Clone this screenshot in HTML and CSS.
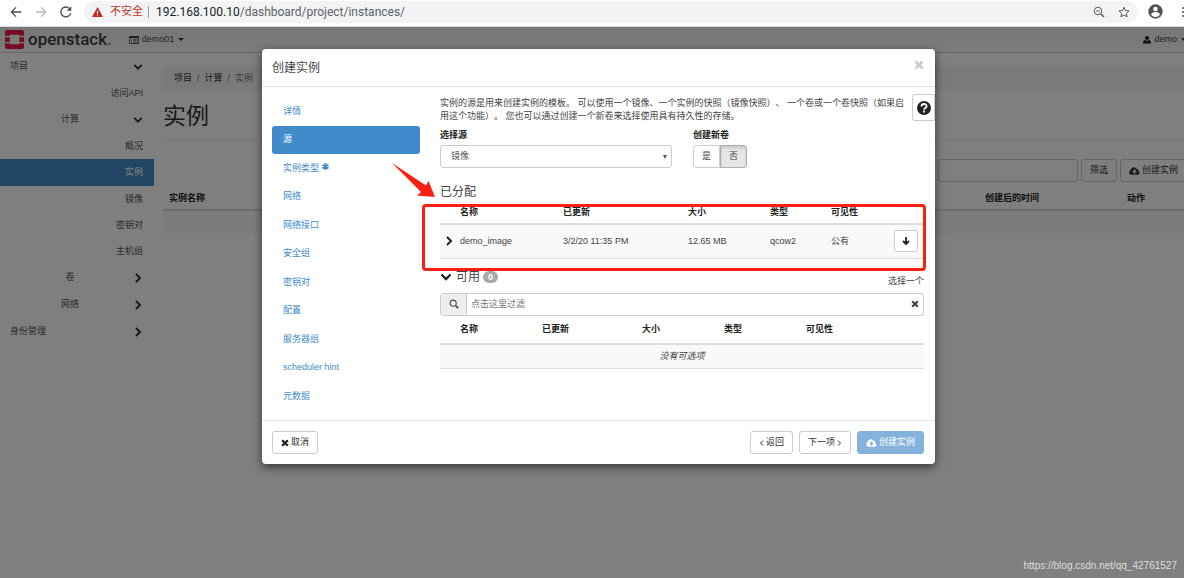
FILE: index.html
```html
<!DOCTYPE html>
<html lang="zh-CN">
<head>
<meta charset="utf-8">
<title>实例 - OpenStack Dashboard</title>
<link rel="stylesheet" href="styles.css">
</head>
<body>
<svg class="sprite" aria-hidden="true">
  <symbol id="chev-right" viewBox="0 0 10 10"><path d="M3 1l4 4-4 4" fill="none" stroke="currentColor" stroke-width="2"/></symbol>
  <symbol id="chev-down" viewBox="0 0 12 12"><path d="M1.500 3.500L6 8l4.500-4.500" fill="none" stroke="currentColor" stroke-width="2.300"/></symbol>
  <symbol id="cloud" viewBox="0 0 20 14"><path fill-rule="evenodd" d="M4.500 14A4.500 4.500 0 0 1 2.700 5.600 5.600 5.600 0 0 1 13 3a3.500 3.500 0 0 1 4 3.800A3.800 3.800 0 0 1 16 14zM10 4L5.500 8.500h3V12h3V8.500h3z" fill="currentColor"/></symbol>
  <symbol id="cross" viewBox="0 0 10 10"><path d="M1.500 1.500l7 7m0-7l-7 7" fill="none" stroke="currentColor" stroke-width="2.800"/></symbol>
</svg>
<div class="app">
  <header class="browser">
    <button class="tool" aria-label="后退"><svg viewBox="0 0 24 24"><path d="M21 12H4m8-8l-8 8 8 8" fill="none" stroke="#4a4d51" stroke-width="2.200"/></svg></button>
    <button class="tool" aria-label="前进"><svg viewBox="0 0 24 24"><path d="M3 12h17m-8-8l8 8-8 8" fill="none" stroke="#b5b7ba" stroke-width="2.200"/></svg></button>
    <button class="tool" aria-label="重新加载"><svg viewBox="0 0 24 24"><path d="M20 14a8.500 8.500 0 1 1-2.300-8.200L20 8" fill="none" stroke="#4a4d51" stroke-width="2.300"/><path d="M21 2v8h-8z" fill="#4a4d51"/></svg></button>
    <div class="omnibox">
      <svg class="warn" viewBox="0 0 12 11"><path d="M6 0l6 11H0z" fill="#c5291f"/><path d="M6 4v3.500M6 8.300v1.300" stroke="#fff" stroke-width="1.200"/></svg>
      <span class="insecure">不安全</span>
      <span class="divider"></span>
      <span class="url">192.168.100.10<span class="path">/dashboard/project/instances/</span></span>
      <button class="tool small push" aria-label="缩放"><svg viewBox="0 0 24 24" fill="none" stroke="#55585c" stroke-width="2"><circle cx="10" cy="10" r="7.500"/><path d="M6.500 10h7"/><path d="M15.500 15.500l6.500 6.500" stroke-width="3"/></svg></button>
      <button class="tool small" aria-label="收藏"><svg viewBox="0 0 24 24"><path d="M12 2.500l2.900 6.600 7.100.7-5.300 4.800 1.500 7L12 18l-6.200 3.600 1.500-7L2 9.800l7.100-.7z" fill="none" stroke="#55585c" stroke-width="2"/></svg></button>
    </div>
    <button class="tool avatar" aria-label="用户"><svg viewBox="0 0 24 24"><circle cx="12" cy="12" r="11.500" fill="#505357"/><circle cx="12" cy="8" r="3.600" fill="#fff"/><path d="M5 17c0-3 4.500-4.300 7-4.300s7 1.300 7 4.300a8.500 8.500 0 0 1-14 0z" fill="#fff"/></svg></button>
    <button class="tool menu" aria-label="菜单"><svg viewBox="0 0 4 14" fill="#505357"><circle cx="2" cy="3" r="1"/><circle cx="2" cy="7" r="1"/><circle cx="2" cy="11" r="1"/></svg></button>
  </header>

  <div class="page">
    <nav class="navbar">
      <a class="brand" href="#"><svg viewBox="0 0 20 20"><path d="M2 0h16a2 2 0 0 1 2 2v4h-5V5H5v1H0V2a2 2 0 0 1 2-2zM0 7.500h5v5H0zM15 7.500h5v5h-5zM0 14h5v1h10v-1h5v4a2 2 0 0 1-2 2H2a2 2 0 0 1-2-2z" fill="#ed1944"/></svg><span>openstack</span><span class="dot">.</span></a>
      <a class="project" href="#"><svg viewBox="0 0 20 16"><path d="M1 1h18v14H1z" fill="none" stroke="#333" stroke-width="1.500"/><path d="M1 2.500h18" stroke="#333" stroke-width="3"/><path d="M4 6.500h2m2 0h9M4 9.500h2m2 0h9M4 12.500h2m2 0h9" stroke="#333" stroke-width="1.300"/></svg>demo01<i class="caret"></i></a>
      <a class="user" href="#"><svg viewBox="0 0 16 16"><circle cx="8" cy="4" r="4" fill="#222"/><path d="M0 15c0-5 2-7 4-7 2 2 6 2 8 0 2 0 4 2 4 7z" fill="#222"/></svg>demo<i class="caret"></i></a>
    </nav>
    <div class="columns">
      <aside class="sidebar">
        <a href="#" class="group"><span>项目</span><svg><use href="#chev-down"/></svg></a>
        <a href="#" class="leaf">访问API</a>
        <a href="#" class="group sub"><span>计算</span><svg><use href="#chev-down"/></svg></a>
        <a href="#" class="leaf">概况</a>
        <a href="#" class="leaf current">实例</a>
        <a href="#" class="leaf">镜像</a>
        <a href="#" class="leaf">密钥对</a>
        <a href="#" class="leaf">主机组</a>
        <a href="#" class="group sub"><span>卷</span><svg><use href="#chev-right"/></svg></a>
        <a href="#" class="group sub"><span>网络</span><svg><use href="#chev-right"/></svg></a>
        <a href="#" class="group"><span>身份管理</span><svg><use href="#chev-right"/></svg></a>
      </aside>
      <main class="content">
        <div class="breadcrumb"><a href="#">项目</a><span>/</span><a href="#">计算</a><span>/</span><span class="here">实例</span></div>
        <h1>实例</h1>
        <div class="filters">
          <input type="text" aria-label="筛选条件">
          <button class="btn">筛选</button>
          <button class="btn"><svg class="cloud"><use href="#cloud"/></svg>创建实例</button>
        </div>
        <table class="instances">
          <thead><tr><th>实例名称</th><th class="col-time">创建后的时间</th><th class="col-action">动作</th></tr></thead>
          <tbody><tr><td colspan="3"></td></tr></tbody>
        </table>
      </main>
    </div>

    <div class="backdrop">
      <section class="dialog" role="dialog" aria-labelledby="dlg-title">
        <header class="dialog-head"><h2 id="dlg-title">创建实例</h2><button class="close" aria-label="关闭"><svg><use href="#cross"/></svg></button></header>
        <div class="dialog-body">
          <nav class="steps">
            <a href="#">详情</a>
            <a href="#" class="active">源</a>
            <a href="#">实例类型 <svg viewBox="0 0 10 10"><path d="M5 0v10M.7 2.500l8.600 5M9.300 2.500l-8.600 5" stroke="currentColor" stroke-width="2.500"/></svg></a>
            <a href="#">网络</a>
            <a href="#">网络接口</a>
            <a href="#">安全组</a>
            <a href="#">密钥对</a>
            <a href="#">配置</a>
            <a href="#">服务器组</a>
            <a href="#">scheduler hint</a>
            <a href="#">元数据</a>
          </nav>
          <div class="source">
            <p class="intro">实例的源是用来创建实例的模板。 可以使用一个镜像、一个实例的快照（镜像快照）、 一个卷或一个卷快照（如果启用这个功能）。 您也可以通过创建一个新卷来选择使用具有持久性的存储。</p>
            <div class="fields">
              <div class="field"><label for="boot">选择源</label><div class="select-wrap"><select id="boot"><option>镜像</option></select></div></div>
              <div class="field"><span class="label" id="vol">创建新卷</span><div class="toggle" role="group" aria-labelledby="vol"><button>是</button><button class="on" aria-pressed="true">否</button></div></div>
            </div>
            <h3 class="allocated-title">已分配</h3>
            <table class="grid allocated">
              <colgroup><col class="w20"><col class="w103"><col class="w125"><col class="w82"><col class="w61"><col></colgroup>
              <thead><tr><th></th><th>名称</th><th>已更新</th><th>大小</th><th>类型</th><th colspan="2">可见性</th></tr></thead>
              <tbody><tr><td><svg class="expand"><use href="#chev-right"/></svg></td><td>demo_image</td><td>3/2/20 11:35 PM</td><td>12.65 MB</td><td>qcow2</td><td>公有</td><td class="act"><button class="btn down" aria-label="移除"><svg viewBox="0 0 10 10"><path d="M5 1v7M2 5l3 3 3-3" fill="none" stroke="#222" stroke-width="1.800"/></svg></button></td></tr></tbody>
            </table>
            <div class="available-title"><svg><use href="#chev-down"/></svg><h3>可用</h3><span class="badge">0</span><span class="hint">选择一个</span></div>
            <div class="search"><span class="glass"><svg viewBox="0 0 12 12" fill="none" stroke="#444"><circle cx="5" cy="5" r="3.700" stroke-width="1.300"/><path d="M7.800 7.800L11 11" stroke-width="2"/></svg></span><input type="text" placeholder="点击这里过滤" aria-label="点击这里过滤"><button aria-label="清除"><svg><use href="#cross"/></svg></button></div>
            <table class="grid available">
              <colgroup><col class="w20"><col class="w82"><col class="w100"><col class="w82"><col class="w82"><col></colgroup>
              <thead><tr><th></th><th>名称</th><th>已更新</th><th>大小</th><th>类型</th><th>可见性</th></tr></thead>
              <tbody><tr><td colspan="6" class="none">没有可选项</td></tr></tbody>
            </table>
          </div>
        </div>
        <footer class="dialog-foot">
          <button class="btn"><svg class="x"><use href="#cross"/></svg>取消</button>
          <button class="btn push"><svg class="thin" viewBox="0 0 5 8"><path d="M4 1.500L1.500 4 4 6.500" fill="none" stroke="#333"/></svg>返回</button>
          <button class="btn">下一项<svg class="thin" viewBox="0 0 5 8"><path d="M1 1.500L3.500 4 1 6.500" fill="none" stroke="#333"/></svg></button>
          <button class="btn primary" disabled><svg class="cloud"><use href="#cloud"/></svg>创建实例</button>
        </footer>
        <button class="help" aria-label="帮助"><svg viewBox="0 0 16 16"><circle cx="8" cy="8" r="8" fill="#222"/><path d="M5.200 6.200C5.200 2.500 11 2.700 11 6c0 2-2.900 2-2.900 4" fill="none" stroke="#fff" stroke-width="2.100"/><path d="M7 11h2.200v2.200H7z" fill="#fff"/></svg></button>
        <div class="mark-box"></div>
        <svg class="mark-arrow" viewBox="0 0 43 35"><path d="M0 0L34 22.500l2.500-4.500L43 34l-18-1.500 4-3.500z" fill="#fb2112"/></svg>
      </section>
      <div class="watermark">https://blog.csdn.net/qq_42761527</div>
    </div>
  </div>
</div>
</body>
</html>
```
FILE: styles.css
```css
* { box-sizing: border-box; }
html, body { height: 100%; }
body {
  margin: 0;
  overflow: hidden;
  font: 9px/13px "Liberation Sans", "Noto Sans CJK SC", sans-serif;
  text-spacing-trim: space-all;
  color: #444;
}
button, input, select { font: inherit; color: inherit; }
button { margin: 0; padding: 0; border: 0; background: none; }
a { color: inherit; text-decoration: none; }
h1, h2, h3, p { margin: 0; font-weight: 400; }
table { width: 100%; border-collapse: collapse; }
th, td { padding: 0; text-align: left; }
svg { display: block; flex: none; }
.sprite { position: absolute; width: 0; height: 0; }
.push { margin-left: auto; }

/* The window continues a little past the right edge */
.app { display: flex; flex-direction: column; height: 100%; margin-right: -13px; }

.browser { display: flex; align-items: center; height: 27px; padding: 0 12px 3px 9px; background: #fff; border-bottom: 1px solid #ddd; }
.tool { margin-right: 11px; }
.tool svg { width: 14px; height: 14px; }
.tool.small { margin-right: 13px; }
.tool.small.push { margin-left: auto; }
.tool.small svg { width: 12px; height: 12px; }
.tool.avatar { margin: 0 18px 0 10px; }
.tool.avatar svg { width: 15px; height: 15px; }
.tool.menu { margin: 0; }
.tool.menu svg { width: 4px; height: 14px; }
.omnibox { flex: 1; display: flex; align-items: center; height: 22px; padding-left: 8px; border-radius: 11px; background: #f1f3f4; font: 12px/20px Roboto, "Noto Sans CJK SC", sans-serif; }
.omnibox .small:last-child { margin-right: 8px; }
.warn { width: 11px; height: 10px; margin-right: 7px; }
.insecure { font-size: 11px; color: #c5372c; }
.divider { width: 1px; height: 12px; margin: 0 7px 0 5px; background: #999; }
.url { color: #202124; }
.path { color: #5f6368; }

.page { position: relative; flex: 1; min-height: 0; background: #fff; }
.navbar { display: flex; align-items: center; height: 26px; padding: 0 10px 0 5px; background: linear-gradient(#eee, #f8f8f8); border-bottom: 1px solid #d0d0d0; }
.navbar a { display: flex; align-items: center; }
.brand { padding-bottom: 2px; font: 500 17px/22px Roboto, sans-serif; color: #3e3e42; }
.brand svg { width: 19px; height: 19px; margin: 1px 4px 0 0; }
.brand .dot { color: #888; }
.project { margin-left: 17px; }
.project svg { width: 10px; height: 8px; margin-right: 3px; }
.user { margin-left: auto; }
.user svg { width: 8px; height: 8px; margin-right: 3px; }
.caret { margin-left: 4px; border: 3px solid transparent; border-top-color: #333; border-bottom: 0; }

.columns { display: flex; }
.sidebar { width: 154px; color: #555; }
.sidebar a { display: flex; align-items: center; height: 26px; padding-right: 11px; }
.sidebar .group { height: 27px; padding-left: 10px; justify-content: space-between; }
.sidebar .sub span { width: 120px; text-align: center; }
.sidebar .group svg { width: 10px; height: 10px; color: #333; }
.sidebar .leaf { justify-content: flex-end; }
.sidebar .current { height: 27px; background: #428bca; color: #fff; }
.content { flex: 1; padding: 13px 10px 0 9px; }
.breadcrumb { display: flex; align-items: center; gap: 5px; height: 24px; padding-left: 11px; background: #f5f5f5; border-radius: 3px; color: #777; }
.breadcrumb a { color: #333; }
.content h1 { padding: 8px 0 6px; border-bottom: 1px solid #eee; font-size: 23px; line-height: 36px; color: #333; }
.filters { display: flex; justify-content: flex-end; gap: 3px; padding: 18px 0 6px; }
.filters input { width: 140px; border: 1px solid #ccc; border-radius: 3px; background: transparent; }
.btn { display: flex; align-items: center; justify-content: center; gap: 2px; height: 23px; padding: 0 8px; border: 1px solid #ccc; border-radius: 3px; background: #fff; color: #333; }
.cloud { width: 11px; height: 8px; }
.instances th { height: 22px; padding-left: 6px; border-bottom: 2px solid #ddd; color: #222; }
.instances .col-time { width: 142px; padding: 0; }
.instances .col-action { width: 60px; padding: 0; }
.instances td { height: 24px; background: #f9f9f9; }

.backdrop { position: absolute; inset: 0; padding: 22px 0; background: rgba(0, 0, 0, .5); }
.dialog { position: relative; width: 57%; min-width: 673px; max-width: 673px; margin: 0 auto; border-radius: 4px; background: #fff; box-shadow: 0 3px 10px rgba(0, 0, 0, .6); }
.dialog-head { display: flex; align-items: center; justify-content: space-between; height: 38px; padding: 0 11px 0 10px; border-bottom: 1px solid #e5e5e5; }
.dialog-head h2 { font-size: 12px; line-height: 18px; }
.close { padding-bottom: 6px; color: #ccc; }
.close svg { width: 10px; height: 10px; }
.dialog-body { display: flex; gap: 20px; min-height: 333px; padding: 10px 11px 10px 10px; }
.steps { display: flex; flex-direction: column; justify-content: space-between; width: 148px; color: #428bca; }
.steps a { display: flex; align-items: center; height: 28px; padding-left: 11px; border-radius: 3px; }
.steps .active { background: #428bca; color: #fff; }
.steps svg { width: 7px; height: 7px; margin: 0 0 4px 3px; }
.source { flex: 1; min-width: 0; }
.intro { padding-right: 12px; }
.fields { display: flex; gap: 21px; padding-top: 6px; }
.field:first-child { width: 232px; }
.field label, .label { display: block; font-weight: 700; line-height: 13px; margin-bottom: 3px; color: #222; }
.select-wrap { position: relative; }
.select-wrap::after { content: ""; position: absolute; right: 5px; top: 10px; border: 2px solid transparent; border-top: 4px solid #555; border-bottom: 0; }
select { width: 100%; height: 23px; padding: 0 10px; border: 1px solid #ccc; border-radius: 3px; appearance: none; background: #fff; color: #555; }
.toggle { display: flex; }
.toggle button { width: 27px; height: 23px; border: 1px solid #ccc; border-radius: 3px 0 0 3px; }
.toggle .on { border-color: #adadad; border-radius: 0 3px 3px 0; background: #e6e6e6; box-shadow: inset 0 2px 3px rgba(0, 0, 0, .13); }
h3 { font-size: 12px; line-height: 18px; }
.allocated-title { margin-top: 15px; }
.grid { table-layout: fixed; }
.grid th { color: #222; border-bottom: 2px solid #ddd; }
.grid td { background: #f9f9f9; border-bottom: 1px solid #ddd; }
.allocated th { height: 23px; }
.allocated td { height: 34px; }
.available th { height: 28px; }
.available td { height: 25px; }
.grid .none { text-align: center; font-style: italic; }
.w20 { width: 20px; }
.w61 { width: 61px; }
.w82 { width: 82px; }
.w100 { width: 100px; }
.w103 { width: 103px; }
.w125 { width: 125px; }
.expand { width: 10px; height: 10px; margin-left: 4px; color: #222; }
.down { width: 24px; height: 22px; margin: 0 6px 0 auto; padding: 0; }
.down svg { width: 10px; height: 10px; }
.available-title { display: flex; align-items: center; height: 20px; margin: 8px 0 6px; }
.available-title svg { width: 12px; height: 12px; margin-right: 4px; color: #222; }
.badge { margin-left: 3px; padding: 0 5px; border-radius: 6px; background: #aaa; color: #fff; font-weight: 700; line-height: 12px; }
.hint { margin: 9px 0 0 auto; }
.search { display: flex; height: 23px; border: 1px solid #ccc; border-radius: 3px; }
.glass { display: flex; align-items: center; justify-content: center; width: 26px; background: #eee; border-right: 1px solid #ccc; }
.glass svg { width: 10px; height: 10px; }
.search input { flex: 1; border: 0; padding: 0 4px; outline: 0; background: none; }
.search input::placeholder { color: #777; }
.search button { padding: 0 4px; color: #444; }
.search button svg { width: 8px; height: 8px; }
.dialog-foot { display: flex; align-items: center; gap: 6px; height: 44px; padding: 0 11px 0 10px; border-top: 1px solid #e5e5e5; }
.x { width: 8px; height: 8px; color: #222; }
.thin { width: 5px; height: 8px; }
.primary { border-color: #85b2dc; background: #85b2dc; color: #fff; }
.help { position: absolute; top: 45px; right: 0; width: 23px; height: 27px; padding: 0 4px; border: 1px solid #ccc; border-radius: 3px 0 0 3px; background: #fff; }
.help svg { width: 14px; height: 14px; }
.mark-box { position: absolute; top: 155px; left: 160px; width: 504px; height: 67px; border: 3px solid #fb2112; border-radius: 4px; }
.mark-arrow { position: absolute; top: 114px; left: 130px; width: 43px; height: 35px; }
.watermark { position: absolute; right: 20px; bottom: 5px; font-family: "Liberation Sans", sans-serif; font-size: 10px; line-height: 14px; color: #ddd; }
```
